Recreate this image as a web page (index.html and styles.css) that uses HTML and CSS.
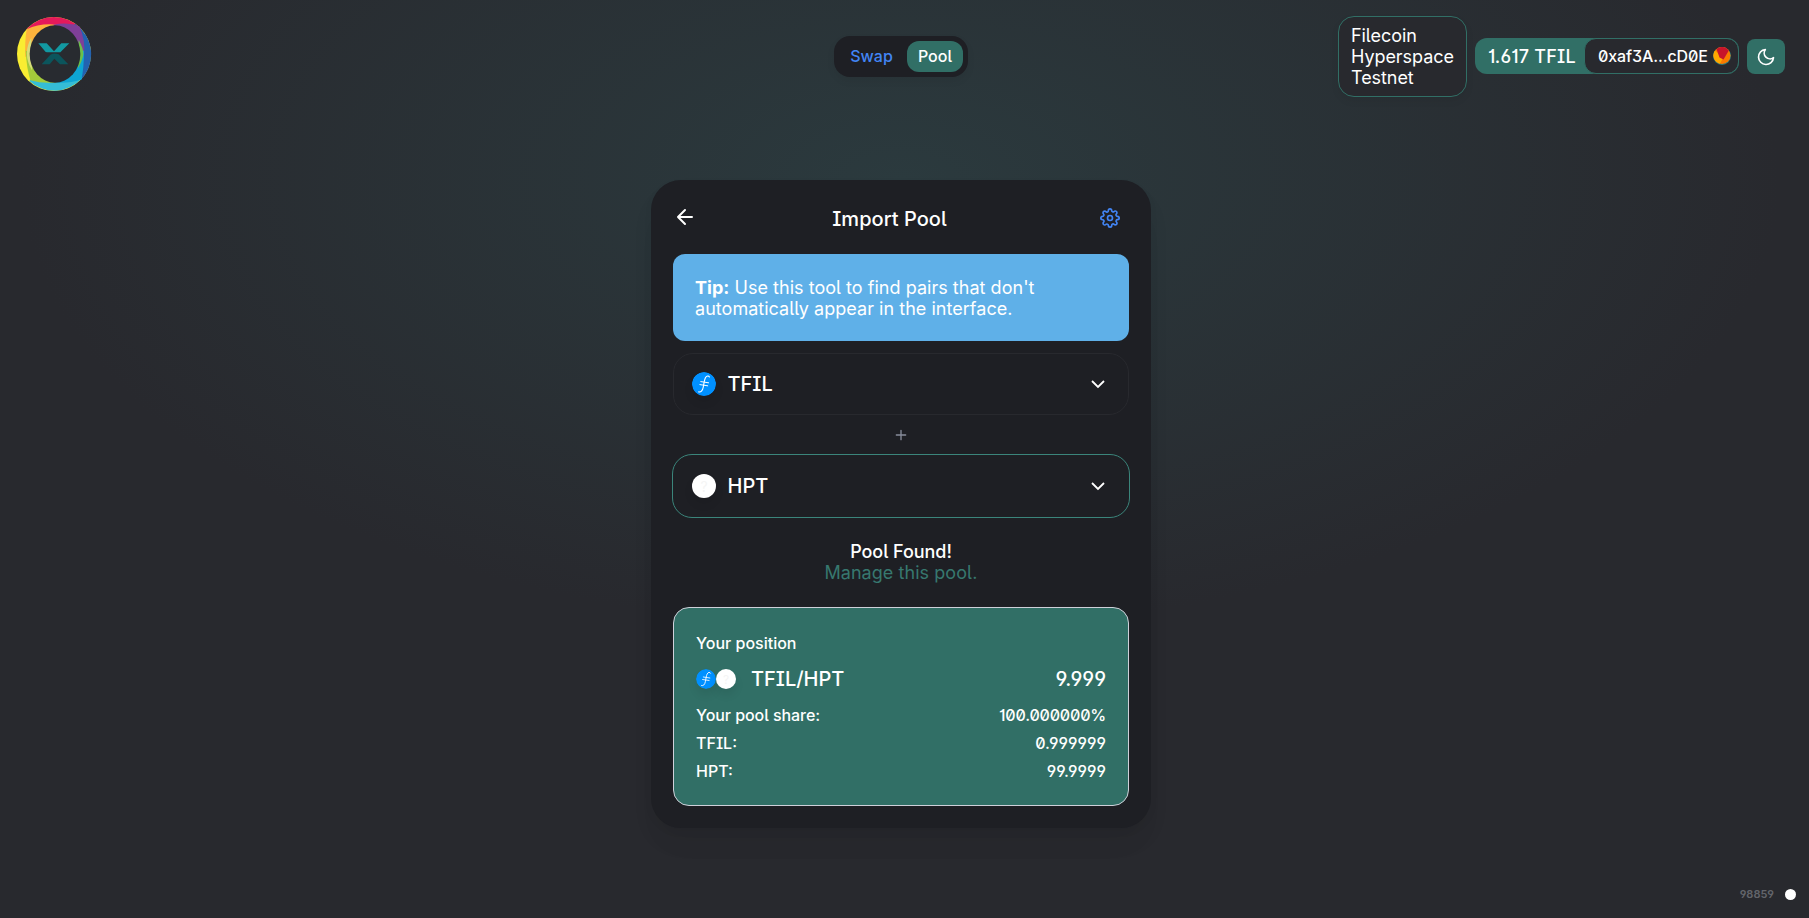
FILE: index.html
```html
<!DOCTYPE html>
<html lang="en">
<head>
<meta charset="utf-8">
<title>Import Pool</title>
<link rel="stylesheet" href="styles.css">
</head>
<body>
<svg width="0" height="0" class="defs">
  <symbol id="fil" viewBox="0 0 24 24">
    <circle cx="12" cy="12" r="12" fill="#0090ff"/>
    <g fill="none" stroke="#fff" stroke-linecap="round">
      <path d="M17.400 5c-.6-1.500-2.900-1.500-4.100 1.100-1 2.200-1.300 5.100-2.100 9.200-.7 3.600-2.400 5.200-4.500 4.600" stroke-width="1.100"/>
      <path d="M8.800 9.600l7.800 1.200M7.900 12.600l7.800 1.200" stroke-width="1"/>
    </g>
  </symbol>
  <symbol id="chevron" viewBox="0 0 14 9">
    <path d="M1 1l6 6 6-6" fill="none" stroke="#fff" stroke-width="1.800"/>
  </symbol>
</svg>
<div class="page">
  <header class="header">
    <a class="logo">
      <svg width="76" height="76" viewBox="48 47 228 228">
        <circle cx="162" cy="161" r="111" fill="#f9ed32"/>
        <path d="M80 86A111 111 0 0 1 243 85L162 161z" fill="#e5195b"/>
        <path d="M225 70A111 111 0 0 1 243 238L162 161z" fill="#2362b0"/>
        <path d="M88 242A111 111 0 0 0 246 234L162 161z" fill="#35bdd6"/>
        <path d="M80 87Q120 68 168 73L90 162L76 170Q74 120 80 87z" fill="#fdb33c"/>
        <path d="M160 73Q205 64 238 78Q257 120 252 165L240 175z" fill="#7f3f98"/>
        <path d="M252 150Q252 205 244 238Q205 250 158 246L240 160z" fill="#0ea5d3"/>
        <path d="M77 150Q80 205 91 240Q130 251 170 246L90 160z" fill="#a3ca3b"/>
        <path d="M236 118Q251 145 250 162Q248 180 234 204z" fill="#6cc04a"/>
        <path d="M94 112Q66 160 96 210z" fill="#d5dd7a"/>
        <ellipse cx="165" cy="161" rx="76" ry="86" fill="#282b30"/>
        <path d="M115 129h25l22 24 22-24h24l-27 27q-40 0-44-1z" fill="#1299a2"/>
        <path d="M125 192h24l14-17 17 17h25l-29-30q-13-6-25 1z" fill="#0b555c"/>
      </svg>
    </a>
    <nav class="tabs">
      <a class="tab">Swap</a>
      <a class="tab tab-active">Pool</a>
    </nav>
    <div class="controls">
      <div class="network">Filecoin Hyperspace Testnet</div>
      <div class="wallet">
        <span class="balance">1.617 TFIL</span>
        <button class="account"><span>0xaf3A...cD0E</span>
          <svg width="18" height="18" viewBox="0 0 18 18">
            <circle cx="9" cy="9" r="9" fill="#2f7d78"/>
            <circle cx="9" cy="8.500" r="8.500" fill="#fa7a00"/>
            <path d="M2 3.500A8.500 8.500 0 0 0 7 16.700L10 11z" fill="#ffa800"/>
            <path d="M3.500 2A8.500 8.500 0 0 1 15.800 3.500L10.500 12.500L6.500 10.500z" fill="#c8142b"/>
          </svg>
        </button>
      </div>
      <button class="theme">
        <svg width="20" height="20" viewBox="0 0 24 24" fill="none" stroke="#fff" stroke-width="2" stroke-linecap="round" stroke-linejoin="round"><path d="M21 12.790A9 9 0 1 1 11.210 3 7 7 0 0 0 21 12.790z"/></svg>
      </button>
    </div>
  </header>

  <main class="card">
    <div class="card-head">
      <svg class="back" width="24" height="24" viewBox="0 0 24 24" fill="none" stroke="#fff" stroke-width="2" stroke-linecap="round" stroke-linejoin="round"><path d="M19 12H5M12 19l-7-7 7-7"/></svg>
      <h1 class="title">Import Pool</h1>
      <svg class="gear" width="20" height="20" viewBox="0 0 24 24" fill="none" stroke="#4285f5" stroke-width="2" stroke-linecap="round" stroke-linejoin="round"><circle cx="12" cy="12" r="3"/><path d="M19.400 15a1.650 1.650 0 0 0 .33 1.820l.06.06a2 2 0 0 1 0 2.830 2 2 0 0 1-2.830 0l-.06-.06a1.650 1.650 0 0 0-1.820-.33 1.650 1.650 0 0 0-1 1.510V21a2 2 0 0 1-2 2 2 2 0 0 1-2-2v-.09A1.650 1.650 0 0 0 9 19.400a1.650 1.650 0 0 0-1.820.33l-.06.06a2 2 0 0 1-2.830 0 2 2 0 0 1 0-2.830l.06-.06a1.650 1.650 0 0 0 .33-1.820 1.650 1.650 0 0 0-1.510-1H3a2 2 0 0 1-2-2 2 2 0 0 1 2-2h.09A1.650 1.650 0 0 0 4.600 9a1.650 1.650 0 0 0-.33-1.820l-.06-.06a2 2 0 0 1 0-2.830 2 2 0 0 1 2.830 0l.06.06a1.650 1.650 0 0 0 1.820.33H9a1.650 1.650 0 0 0 1-1.510V3a2 2 0 0 1 2-2 2 2 0 0 1 2 2v.09a1.650 1.650 0 0 0 1 1.510 1.650 1.650 0 0 0 1.820-.33l.06-.06a2 2 0 0 1 2.830 0 2 2 0 0 1 0 2.830l-.06.06a1.650 1.650 0 0 0-.33 1.820V9a1.650 1.650 0 0 0 1.510 1H21a2 2 0 0 1 2 2 2 2 0 0 1-2 2h-.09a1.650 1.650 0 0 0-1.510 1z"/></svg>
    </div>
    <div class="tip"><b>Tip:</b> Use this tool to find pairs that don't automatically appear in the interface.</div>
    <button class="token">
      <svg class="coin" width="24" height="24"><use href="#fil"/></svg>
      <span class="token-name">TFIL</span>
      <svg width="14" height="9"><use href="#chevron"/></svg>
    </button>
    <div class="plus">
      <svg width="16" height="16" viewBox="0 0 24 24" fill="none" stroke="#888d9b" stroke-width="2" stroke-linecap="round"><path d="M12 5v14M5 12h14"/></svg>
    </div>
    <button class="token token-focus">
      <span class="coin blank">?</span>
      <span class="token-name">HPT</span>
      <svg width="14" height="9"><use href="#chevron"/></svg>
    </button>
    <div class="found">
      <div class="found-title">Pool Found!</div>
      <a class="found-link">Manage this pool.</a>
    </div>
    <section class="position">
      <div class="row">Your position</div>
      <div class="row row-pair">
        <div class="pair">
          <svg class="coin" width="20" height="20"><use href="#fil"/></svg>
          <span class="coin blank blank-small">?</span>
          <span class="pair-name">TFIL/HPT</span>
        </div>
        <span>9.999</span>
      </div>
      <div class="row"><span class="share-label">Your pool share:</span><span class="share">100.000000%</span></div>
      <div class="row"><span>TFIL:</span><span>0.999999</span></div>
      <div class="row"><span>HPT:</span><span>99.9999</span></div>
    </section>
  </main>

  <footer class="block"><span>98859</span><i class="dot"></i></footer>
</div>
</body>
</html>
```

FILE: styles.css
```css
* { box-sizing: border-box; }
html { background: #28292e; }
body {
  margin: 0;
  height: 918px;
  overflow: hidden;
  color: #fff;
  font-family: Inter, sans-serif;
  font-size: 18px;
  font-feature-settings: 'ss01' on, 'ss02' on, 'cv01' on, 'cv03' on;
  background: radial-gradient(880px 450px at 901px 180px, #2b3a3e 0%, #28292e 100%) no-repeat;
}
.defs { position: absolute; }
button {
  font: inherit;
  font-feature-settings: inherit;
  color: inherit;
  padding: 0;
  border: 0;
}
svg { display: block; flex: none; }
.page {
  width: 1802px;
  height: 918px;
  display: flex;
  flex-direction: column;
}
.header {
  display: grid;
  grid-template-columns: 1fr auto 1fr;
  align-items: center;
  padding: 16px 17px 16px 16px;
  height: 113px;
}
.logo { align-self: start; }
.tabs {
  display: flex;
  gap: 3px;
  padding: 5px;
  height: 41px;
  width: 134px;
  border-radius: 16px;
  background: #1e1f24;
  font-size: 16px;
  font-weight: 500;
  box-shadow: 0 4px 8px rgba(0, 0, 0, 0.060);
}
.tab {
  display: flex;
  align-items: center;
  justify-content: center;
  width: 65px;
  padding-left: 1px;
  padding-bottom: 1px;
  color: #4285f5;
}
.tab-active {
  width: 56px;
  border-radius: 12px;
  background: #316f66;
  color: #fff;
}
.controls {
  display: flex;
  align-items: center;
  justify-content: flex-end;
  gap: 8px;
}
.network {
  width: 129px;
  height: 81px;
  padding: 8px 12px;
  border: 1px solid #316f66;
  border-radius: 16px;
  background: #28292e;
  line-height: 21px;
  letter-spacing: -0.060px;
  box-shadow: 0 4px 8px rgba(0, 0, 0, 0.060);
}
.wallet {
  display: flex;
  align-items: center;
  height: 36px;
  width: 264px;
  margin-bottom: 1px;
  border-radius: 12px;
  background: #316f66;
  font-weight: 500;
}
.balance {
  width: 109px;
  padding-left: 13px;
  white-space: nowrap;
  letter-spacing: 0.200px;
}
.account {
  display: flex;
  align-items: center;
  justify-content: space-between;
  width: 155px;
  height: 36px;
  padding: 0 7px 0 13px;
  border: 1px solid #316f66;
  border-radius: 12px;
  background: #28292e;
  font-size: 16px;
  font-weight: 500;
  letter-spacing: -0.100px;
}
.theme {
  display: grid;
  place-items: center;
  width: 38px;
  height: 35px;
  border-radius: 8px;
  background: #316f66;
}
.card {
  width: 500px;
  height: 648px;
  margin: 67px auto 0;
  padding: 0 22px;
  border-radius: 30px;
  background: #1e1f24;
  box-shadow: 0 0 1px rgba(0, 0, 0, 0.010), 0 4px 8px rgba(0, 0, 0, 0.040), 0 16px 24px rgba(0, 0, 0, 0.040), 0 24px 32px rgba(0, 0, 0, 0.010);
}
.card-head {
  display: flex;
  align-items: center;
  justify-content: space-between;
  height: 74px;
  padding: 3px 9px 0 0;
}
.back { margin-top: -3px; }
.gear { margin-top: -2px; }
.title {
  margin: 0 18px 0 0;
  font-size: 20px;
  font-weight: 500;
  letter-spacing: 0.040px;
}
.tip {
  height: 87px;
  padding: 23px 22px;
  border-radius: 12px;
  background: #5fb0e8;
  line-height: 21px;
  letter-spacing: 0.030px;
}
.token {
  display: flex;
  align-items: center;
  width: 456px;
  height: 62px;
  margin-top: 12px;
  padding: 0 23px 0 18px;
  border: 1px solid #28292e;
  border-radius: 20px;
  background: #1e1f24;
  font-size: 20px;
  font-weight: 500;
  text-align: left;
}
.token-focus {
  width: 458px;
  height: 64px;
  margin: 0 -1px;
  padding: 0 24px 0 19px;
  border-color: #3b857b;
}
.token-name { flex: 1; margin-left: 11.500px; }
.coin { border-radius: 50%; box-shadow: 0 6px 10px rgba(0, 0, 0, 0.080); }
.blank {
  display: grid;
  place-items: center;
  width: 24px;
  height: 24px;
  background: #fff;
  color: #f5f5f5;
  font-size: 14px;
  font-weight: 400;
}
.blank-small { width: 20px; height: 20px; font-size: 12px; }
.plus {
  display: grid;
  place-items: center;
  height: 39px;
}
.found {
  height: 89px;
  padding-top: 23px;
  text-align: center;
  line-height: 21px;
}
.found-title { font-weight: 500; letter-spacing: -0.050px; }
.found-link { color: #37786f; letter-spacing: 0.060px; }
.position {
  display: flex;
  flex-direction: column;
  gap: 8px;
  height: 199px;
  padding: 25px 22px;
  border: 1px solid #ced0d9;
  border-radius: 16px;
  background: #316f66;
  font-size: 16px;
  font-weight: 500;
}
.row {
  display: flex;
  justify-content: space-between;
  align-items: center;
  height: 20px;
  flex: none;
}
.row-pair { height: 36px; font-size: 20px; }
.share-label { letter-spacing: -0.060px; }
.share { letter-spacing: -0.180px; }
.pair { display: flex; align-items: center; }
.pair-name { margin-left: 15px; }
.block {
  display: flex;
  align-items: center;
  justify-content: flex-end;
  gap: 11px;
  margin-top: auto;
  height: 47px;
  padding-right: 6px;
  color: #63656b;
  font-size: 11px;
  font-weight: 600;
  line-height: 1;
}
.block span { margin-top: -1px; }
.dot { width: 11px; height: 11px; border-radius: 50%; background: #fff; }
```
